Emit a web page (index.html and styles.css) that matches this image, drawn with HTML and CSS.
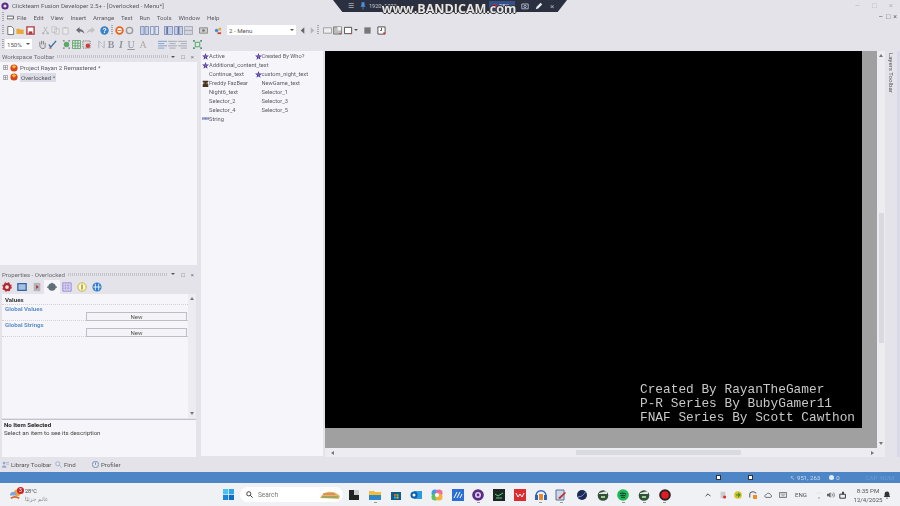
FILE: index.html
```html
<!DOCTYPE html>
<html lang="en">
  <head>
    <meta charset="UTF-8" />
    <meta name="viewport" content="width=device-width, initial-scale=1.0" />
    <title>Clickteam Fusion Developer</title>
    <link rel="stylesheet" href="styles.css">
  </head>
  <body>
    <div class="app">
      <!-- Title bar -->
      <div class="titlebar">
        <svg class="app-icon" viewBox="0 0 10 10"><circle cx="5" cy="5" r="4.5" fill="#5a2a86"/><circle cx="5" cy="5" r="2" fill="#e8d8f4"/></svg>
        <span class="title-text">Clickteam Fusion Developer 2.5+ - [Overlocked - Menu*]</span>
        <div class="win-controls">
          <span>&#8211;</span><span>&#9633;</span><span>&#215;</span>
        </div>
      </div>

      <!-- Menu -->
      <div class="menubar">
        <span class="grip"></span>
        <svg class="menu-icon" viewBox="0 0 10 6"><rect x="0" y="1" width="9" height="4" fill="#fff" stroke="#333"/></svg>
        <span class="menu-item">File</span>
        <span class="menu-item">Edit</span>
        <span class="menu-item">View</span>
        <span class="menu-item">Insert</span>
        <span class="menu-item">Arrange</span>
        <span class="menu-item">Text</span>
        <span class="menu-item">Run</span>
        <span class="menu-item">Tools</span>
        <span class="menu-item">Window</span>
        <span class="menu-item">Help</span>
        <div class="child-controls">
          <span>&#8211;</span><span>&#9633;</span><span>&#215;</span>
        </div>
      </div>

      <!-- Toolbars -->
      <div class="toolbar toolbar-top">
        <span class="grip"></span>
        <svg class="ic" viewBox="0 0 10 10"><path d="M2 .5h4l2.5 2.5v6.500h-6.500z" fill="#fff" stroke="#666"/></svg>
        <svg class="ic" viewBox="0 0 10 10"><path d="M.5 3h3l1 1h4v5h-8z" fill="#e9a838"/></svg>
        <svg class="ic" viewBox="0 0 10 10"><path d="M1 1h8v8h-8z" fill="#fff" stroke="#b23a3a" stroke-width="1.500"/><path d="M3 6h4v3h-4z" fill="#b23a3a"/></svg>
        <span class="gap-5"></span>
        <svg class="ic dim" viewBox="0 0 10 10"><path d="M3 1l4 6M7 1l-4 6" stroke="#999" fill="none"/><circle cx="2.500" cy="8" r="1.300" fill="#999"/><circle cx="7.500" cy="8" r="1.300" fill="#999"/></svg>
        <svg class="ic dim" viewBox="0 0 10 10"><path d="M1 1h5v6h-5zM4 3h5v6h-5z" fill="#eee" stroke="#aaa"/></svg>
        <svg class="ic dim" viewBox="0 0 10 10"><path d="M2 2h6v7h-6z" fill="#eee" stroke="#aaa"/><path d="M4 1h2v2h-2z" fill="#aaa"/></svg>
        <span class="gap-5"></span>
        <svg class="ic" viewBox="0 0 10 10"><path d="M4 1l-4 3.500 4 3.500v-2c2 0 4 .5 5.500 2.500-.5-3-2.500-5-5.500-5.300z" fill="#6b6b75"/></svg>
        <svg class="ic dim" viewBox="0 0 10 10"><path d="M6 1l4 3.500-4 3.500v-2c-2 0-4 .5-5.500 2.500.5-3 2.500-5 5.500-5.300z" fill="#aaa"/></svg>
        <span class="gap-4"></span>
        <svg class="ic" viewBox="0 0 10 10"><circle cx="5" cy="5" r="4.700" fill="#3b83c4"/><text x="5" y="8" text-anchor="middle" class="ic-text">?</text></svg>
        <span class="gap-2"></span><span class="grip"></span>
        <svg class="ic" viewBox="0 0 10 10"><circle cx="5" cy="5" r="3.700" fill="#fff" stroke="#e8641f" stroke-width="2"/><path d="M3 5h4" stroke="#e8641f"/></svg>
        <svg class="ic" viewBox="0 0 10 10"><circle cx="5" cy="5" r="3.500" fill="none" stroke="#999" stroke-width="1.500"/></svg>
        <span class="gap-5"></span>
        <svg class="ic" viewBox="0 0 10 10"><path d="M.5.5h4v9h-4zM5.500.5h4v9h-4z" fill="#c5d0e6" stroke="#7e8fb5"/></svg>
        <svg class="ic" viewBox="0 0 10 10"><path d="M.5.5h4v9h-4zM5.500.5h4v9h-4z" fill="#dde3f1" stroke="#7e8fb5"/></svg>
        <span class="gap-4"></span>
        <svg class="ic" viewBox="0 0 10 10"><path d="M.5.5h9v9h-9z" fill="#c5d0e6" stroke="#7e8fb5"/><path d="M3.500 1v8" stroke="#66789f" stroke-width="2"/></svg>
        <svg class="ic" viewBox="0 0 10 10"><path d="M.5.5h9v9h-9z" fill="#c5d0e6" stroke="#7e8fb5"/><path d="M5 1v8" stroke="#66789f" stroke-width="2"/></svg>
        <svg class="ic" viewBox="0 0 10 10"><path d="M.5.5h9v9h-9z" fill="#d3d6df" stroke="#a2a6b2"/><path d="M1 5h8" stroke="#a2a6b2"/></svg>
        <span class="gap-5"></span>
        <svg class="ic" viewBox="0 0 10 10"><path d="M.5 2h9v6h-9z" fill="#ccc" stroke="#888"/><circle cx="5" cy="5" r="1.500" fill="#777"/></svg>
        <span class="gap-4"></span>
        <svg class="ic" viewBox="0 0 10 10"><circle cx="4" cy="5" r="2" fill="#4b8fc8"/><path d="M6 2h3v3h-3z" fill="#e9a838"/><path d="M5 7h4v2h-4z" fill="#c9463a"/></svg>
        <span class="gap-5"></span>
        <div class="combo combo-frame"><span>2 - Menu</span><i class="caret"></i></div>
        <span class="gap-1"></span>
        <svg class="ic" viewBox="0 0 10 10"><path d="M7 1.500v7l-4-3.500z" fill="#666"/></svg>
        <svg class="ic" viewBox="0 0 10 10"><path d="M3 1.500v7l4-3.500z" fill="#b5b5bd"/></svg>
        <span class="grip"></span>
        <span class="gap-2"></span>
        <svg class="ic" viewBox="0 0 10 10"><path d="M.5 2h9v6h-9z" fill="#eee" stroke="#999"/></svg>
        <svg class="ic" viewBox="0 0 10 10"><path d="M.5 1h9v8h-9z" fill="#bbb" stroke="#777"/><path d="M5 1h4v4h-4z" fill="#eee"/><path d="M7 8h2v1h-2z" fill="#d33"/></svg>
        <span class="gap-1"></span>
        <svg class="ic" viewBox="0 0 10 10"><path d="M.5 1.500h8v7h-8z" fill="#fff" stroke="#444"/><path d="M7 8h2v1h-2z" fill="#d33"/></svg>
        <span class="gap-1"></span>
        <i class="caret"></i>
        <span class="gap-4"></span>
        <svg class="ic" viewBox="0 0 10 10"><path d="M1.500 1.500h7v7h-7z" fill="#777"/></svg>
        <span class="gap-4"></span>
        <svg class="ic" viewBox="0 0 10 10"><path d="M1 1h8v8h-8z" fill="#fff" stroke="#444"/><path d="M5 2v3h-1.500" stroke="#444" fill="none"/><path d="M7 7h2v2h-2z" fill="#d33"/></svg>
      </div>

      <div class="toolbar toolbar-bottom">
        <span class="grip"></span>
        <div class="combo combo-zoom"><span>150%</span><i class="caret"></i></div>
        <span class="gap-5"></span>
        <svg class="ic" viewBox="0 0 10 10"><path d="M2 5v-3M4 5v-4M6 5v-4M8 6v-3M2 5c0 3 1 4.500 3.500 4.500s2.500-1.500 2.500-3.500" stroke="#777" fill="#ddd"/></svg>
        <svg class="ic" viewBox="0 0 10 10"><path d="M1 5l2 3 6-7" stroke="#3a6ea5" stroke-width="1.500" fill="none"/><path d="M1 9h3" stroke="#c9463a"/></svg>
        <span class="gap-4"></span>
        <svg class="ic" viewBox="0 0 10 10"><path d="M1 1h2M7 1h2M1 9h2M7 9h2" stroke="#555" fill="none"/><circle cx="5" cy="5" r="3" fill="#5ba86a"/></svg>
        <svg class="ic" viewBox="0 0 10 10"><path d="M.5.5h9v9h-9zM3.500.5v9M6.500.5v9M.5 3.500h9M.5 6.500h9" stroke="#5ba86a" fill="none"/></svg>
        <svg class="ic" viewBox="0 0 10 10"><path d="M1 1h8v8h-8z" fill="#ddd" stroke="#777" stroke-dasharray="1.500 1"/><circle cx="6.500" cy="6.500" r="2.500" fill="#d23c3c"/></svg>
        <span class="gap-5"></span>
        <svg class="ic dim" viewBox="0 0 10 10"><path d="M2 1v8M2 1l3 3M8 9v-8M8 9l-3-3" stroke="#8894a8" fill="none"/></svg>
        <span class="fmt">B</span>
        <span class="fmt fmt-i">I</span>
        <span class="fmt fmt-u">U</span>
        <span class="fmt fmt-a">A</span>
        <span class="gap-9"></span>
        <svg class="ic" viewBox="0 0 10 10"><path d="M0 1.500h10M0 4h7M0 6.500h10M0 9h7" stroke="#7c9ccb" fill="none"/></svg>
        <svg class="ic" viewBox="0 0 10 10"><path d="M0 1.500h10M1.500 4h7M0 6.500h10M1.500 9h7" stroke="#a0a6b2" fill="none"/></svg>
        <svg class="ic" viewBox="0 0 10 10"><path d="M0 1.500h10M3 4h7M0 6.500h10M3 9h7" stroke="#a0a6b2" fill="none"/></svg>
        <span class="gap-5"></span>
        <svg class="ic" viewBox="0 0 10 10"><path d="M2.500 2.500h5v5h-5z" fill="#d9ebdc" stroke="#4a9a68"/><path d="M0 0h2v2h-2zM8 0h2v2h-2zM0 8h2v2h-2zM8 8h2v2h-2z" fill="#4a9a68"/></svg>
      </div>

      <!-- Main area -->
      <div class="main">
        <div class="left-dock">
          <div class="dock-head">
            <span>Workspace Toolbar</span><span class="dots"></span>
            <span class="dock-btns"><i class="caret"></i><b>&#9633;</b><b>&#215;</b></span>
          </div>
          <div class="tree">
            <div class="tree-row">
              <span class="expander">+</span>
              <svg class="tree-icon" viewBox="0 0 10 10"><circle cx="5" cy="5" r="4.500" fill="#d8431d"/><path d="M2 3l3-2 3 2-3 3z" fill="#f5b42b"/></svg>
              <span>Project Rayan 2 Remastered *</span>
            </div>
            <div class="tree-row">
              <span class="expander">+</span>
              <svg class="tree-icon" viewBox="0 0 10 10"><circle cx="5" cy="5" r="4.500" fill="#d8431d"/><path d="M2 3l3-2 3 2-3 3z" fill="#f5b42b"/></svg>
              <span class="selected">Overlocked *</span>
            </div>
          </div>
          <div class="dock-head props-head">
            <span>Properties - Overlocked</span><span class="dots"></span>
            <span class="dock-btns"><i class="caret"></i><b>&#9633;</b><b>&#215;</b></span>
          </div>
          <div class="props-tabs">
            <svg class="tab-ic" viewBox="0 0 12 12"><circle cx="6" cy="6" r="3.500" fill="none" stroke="#b4262f" stroke-width="2.500"/><circle cx="6" cy="6" r="5" fill="none" stroke="#b4262f" stroke-width="1.500" stroke-dasharray="2 2"/></svg>
            <svg class="tab-ic" viewBox="0 0 12 12"><path d="M1 2h10v8h-10z" fill="#a8c0df" stroke="#2f63a8" stroke-width="1.500"/></svg>
            <svg class="tab-ic" viewBox="0 0 12 12"><path d="M2 1h8v10h-8z" fill="#b5b5bb"/><path d="M5 3.500v5l3-2.500z" fill="#b02a2a"/></svg>
            <span class="tab-on"><svg class="tab-ic" viewBox="0 0 12 12"><circle cx="6" cy="6" r="4.500" fill="#5f6f76"/><path d="M0 6h12M6 1v2" stroke="#5f6f76" stroke-width="1.500"/></svg></span>
            <svg class="tab-ic" viewBox="0 0 12 12"><path d="M1 1h10v10h-10z" fill="#dcd6f2" stroke="#8d80cf"/><path d="M4.500 2v8M7.500 2v8M2 4.500h8M2 7.500h8" stroke="#8d80cf" stroke-dasharray="1 1"/></svg>
            <svg class="tab-ic" viewBox="0 0 12 12"><circle cx="6" cy="6" r="5" fill="#fff8c8" stroke="#bdb33a" stroke-width="1.200"/><path d="M6 3v6" stroke="#8c8420" stroke-width="1.500"/></svg>
            <svg class="tab-ic" viewBox="0 0 12 12"><circle cx="6" cy="6" r="5.500" fill="#2f7bd1"/><path d="M4 2v8M8 2v8M1.500 6h9" stroke="#fff"/></svg>
          </div>
          <div class="props-body">
            <div class="props-list">
              <div class="prop-row prop-title">Values</div>
              <div class="prop-row prop-group">Global Values</div>
              <div class="prop-row prop-action"><button class="new-btn">New</button></div>
              <div class="prop-row prop-group">Global Strings</div>
              <div class="prop-row prop-action"><button class="new-btn">New</button></div>
            </div>
            <div class="props-scroll"><i class="arrow-up"></i><i class="arrow-down"></i></div>
          </div>
          <div class="desc-box">
            <strong>No Item Selected</strong>
            <span>Select an item to see its description</span>
          </div>
        </div>

        <div class="objects">
          <div class="obj"><svg class="obj-icon" viewBox="0 0 10 10"><path d="M5 0l1.300 3.500 3.700.200-3 2.300 1 3.800-3-2.200-3 2.200 1-3.800-3-2.300 3.700-.200z" fill="#3c3fb8"/><circle cx="5" cy="5" r="1.300" fill="#e0557a"/></svg>Active</div>
          <div class="obj"><svg class="obj-icon" viewBox="0 0 10 10"><path d="M5 0l1.300 3.500 3.700.200-3 2.300 1 3.800-3-2.200-3 2.200 1-3.800-3-2.300 3.700-.200z" fill="#3c3fb8"/><circle cx="5" cy="5" r="1.300" fill="#e0557a"/></svg>Created By Who?</div>
          <div class="obj obj-wide"><svg class="obj-icon" viewBox="0 0 10 10"><path d="M5 0l1.300 3.500 3.700.200-3 2.300 1 3.800-3-2.200-3 2.200 1-3.800-3-2.300 3.700-.200z" fill="#3c3fb8"/><circle cx="5" cy="5" r="1.300" fill="#e0557a"/></svg>Additional_content_text</div>
          <div class="obj"><span class="obj-icon"></span>Continue_text</div>
          <div class="obj"><svg class="obj-icon" viewBox="0 0 10 10"><path d="M5 0l1.300 3.500 3.700.200-3 2.300 1 3.800-3-2.200-3 2.200 1-3.800-3-2.300 3.700-.200z" fill="#3c3fb8"/><circle cx="5" cy="5" r="1.300" fill="#e0557a"/></svg>custom_night_text</div>
          <div class="obj"><svg class="obj-icon" viewBox="0 0 10 10"><path d="M1 1h8v2h-8zM2 3h6v3h-6zM1 6h8v4h-8z" fill="#4b3320"/><path d="M3 4h1v1h-1zM6 4h1v1h-1z" fill="#e5c9a0"/></svg>Freddy FazBear</div>
          <div class="obj"><span class="obj-icon"></span>NewGame_text</div>
          <div class="obj"><span class="obj-icon"></span>Night6_text</div>
          <div class="obj"><span class="obj-icon"></span>Selector_1</div>
          <div class="obj"><span class="obj-icon"></span>Selector_2</div>
          <div class="obj"><span class="obj-icon"></span>Selector_3</div>
          <div class="obj"><span class="obj-icon"></span>Selector_4</div>
          <div class="obj"><span class="obj-icon"></span>Selector_5</div>
          <div class="obj"><svg class="obj-icon" viewBox="0 0 10 10"><path d="M0 3h10v4h-10z" fill="#c9d2ea"/><path d="M1 3.500v3M3 3.500v3M5 3.500v3M7 3.500v3M9 3.500v3" stroke="#3c4f9a"/></svg>String</div>
        </div>

        <div class="editor">
          <div class="editor-view">
            <div class="frame">
              <div class="credits">
                <div>Created By RayanTheGamer</div>
                <div>P-R Series By BubyGamer11</div>
                <div>FNAF Series By Scott Cawthon</div>
              </div>
            </div>
            <div class="v-scroll"><i class="arrow-up"></i><span class="v-thumb"></span><i class="arrow-down"></i></div>
          </div>
          <div class="h-scroll"><i class="arrow-left"></i><span class="h-thumb"></span><i class="arrow-right"></i></div>
        </div>

        <div class="layers-dock">
          <span class="layers-label">Layers Toolbar</span>
        </div>
      </div>

      <!-- Bottom tabs -->
      <div class="bottom-tabs">
        <span class="btab btab-lib"><svg class="btab-ic" viewBox="0 0 10 10"><circle cx="3" cy="3" r="2" fill="#9aa8c8"/><path d="M0 9c0-3 6-3 6 0zM6 2h4M6 4.500h4" stroke="#9aa8c8" fill="#9aa8c8"/></svg>Library Toolbar</span>
        <span class="btab btab-find"><svg class="btab-ic" viewBox="0 0 10 10"><circle cx="4" cy="4" r="3" fill="none" stroke="#8ea4cf"/><path d="M6 6l3.500 3.500" stroke="#8ea4cf"/></svg>Find</span>
        <span class="btab btab-prof"><svg class="btab-ic" viewBox="0 0 10 10"><circle cx="5" cy="5" r="4.500" fill="none" stroke="#5576a8"/><path d="M5 2v3.500" stroke="#5576a8"/></svg>Profiler</span>
      </div>

      <!-- Status bar -->
      <div class="statusbar">
        <span class="st-box st-a"></span>
        <span class="st-box st-b"></span>
        <span class="st-cursor">&#8598;</span>
        <span class="st-coord">951, 263</span>
        <span class="st-obj"></span>
        <span>0</span>
        <span class="st-caps">CAP&nbsp;&nbsp;NUM</span>
      </div>

      <!-- Windows taskbar -->
      <div class="taskbar">
        <div class="weather">
          <svg class="weather-ic" viewBox="0 0 14 14"><circle cx="9" cy="5" r="3.500" fill="#f0a030"/><path d="M1 8c0-3 2-4 4-4s3 1 3 4z" fill="#7fa8d6"/><path d="M2 11c3-2 6-2 9 0" stroke="#d9632a" stroke-width="2" fill="none"/></svg>
          <span class="badge">3</span>
          <div class="weather-text"><span>28°C</span><span class="weather-ar" dir="rtl">غائم جزئيًا</span></div>
        </div>
        <svg class="start" viewBox="0 0 12 12"><path d="M0 0h5.600v5.600h-5.600z" fill="#4cc2f1"/><path d="M6.400 0h5.600v5.600h-5.600z" fill="#2ba6ea"/><path d="M0 6.400h5.600v5.600h-5.600z" fill="#1a86da"/><path d="M6.400 6.400h5.600v5.600h-5.600z" fill="#0f6cc4"/></svg>
        <div class="search">
          <svg class="search-ic" viewBox="0 0 10 10"><circle cx="4" cy="4" r="3" fill="none" stroke="#222" stroke-width="1.200"/><path d="M6.200 6.200l3.300 3.300" stroke="#222" stroke-width="1.300"/></svg>
          <span>Search</span>
          <svg class="search-art" viewBox="0 0 20 10"><path d="M0 8c4-8 14-8 20-2l-1 3z" fill="#e3b46b"/><path d="M2 7h16" stroke="#5c9a50"/><path d="M3 4h12" stroke="#d86a3e"/></svg>
        </div>
        <div class="apps">
          <span class="app-slot"><svg viewBox="0 0 12 12"><path d="M1 1h5v5h5v5h-10z" fill="#222"/><path d="M6 1h5v5h-5z" fill="#ccc"/></svg></span>
          <span class="app-slot on"><svg viewBox="0 0 12 12"><path d="M0 2h5l1 1h6v8h-12z" fill="#f3bd38"/><path d="M0 6h12v5h-12z" fill="#2f86c9"/></svg></span>
          <span class="app-slot"><svg viewBox="0 0 12 12"><path d="M1 3h10v8h-10z" fill="#0f5c88"/><path d="M4 5h2v2h-2z" fill="#e8553a"/><path d="M6.500 5h2v2h-2z" fill="#74b84a"/><path d="M4 7.500h2v2h-2z" fill="#3ca5e8"/><path d="M6.500 7.500h2v2h-2z" fill="#f3bd38"/></svg></span>
          <span class="app-slot"><svg viewBox="0 0 12 12"><path d="M4 2h8v8h-8z" fill="#2b9be0"/><circle cx="4" cy="6" r="3.500" fill="#0b5ea8"/><circle cx="4" cy="6" r="1.500" fill="#fff"/></svg></span>
          <span class="app-slot"><svg viewBox="0 0 12 12"><circle cx="4" cy="4" r="3.500" fill="#3e9bea"/><circle cx="8" cy="4" r="3.500" fill="#ef6b9c"/><circle cx="4" cy="8" r="3.500" fill="#5ec26a"/><circle cx="8" cy="8" r="3.500" fill="#f0b23c"/><circle cx="6" cy="6" r="2" fill="#fff"/></svg></span>
          <span class="app-slot"><svg viewBox="0 0 12 12"><path d="M0 0h12v12h-12z" fill="#2a6fd6"/><path d="M2 9l3-6M5 9l3-6M8 9l2-4" stroke="#fff" fill="none"/></svg></span>
          <span class="app-slot on"><svg viewBox="0 0 12 12"><circle cx="6" cy="6" r="5.800" fill="#5a2a86"/><circle cx="6" cy="6" r="3" fill="#ded0ee"/><circle cx="6" cy="6" r="1.400" fill="#5a2a86"/></svg></span>
          <span class="app-slot"><svg viewBox="0 0 12 12"><path d="M0 0h12v12h-12z" fill="#1c2626"/><path d="M2 5l3 2 5-3M3 9h6" stroke="#5fd07a" fill="none"/></svg></span>
          <span class="app-slot"><svg viewBox="0 0 12 12"><path d="M0 0h12v12h-12z" fill="#de2b30"/><path d="M2 4l2 4 2-3 2 3 2-4" stroke="#fff" fill="none"/></svg></span>
          <span class="app-slot on"><svg viewBox="0 0 12 12"><path d="M1 7c0-7 10-7 10 0" fill="none" stroke="#2e63c6" stroke-width="1.500"/><path d="M0 6h3v5h-3zM9 6h3v5h-3z" fill="#2e63c6"/><path d="M4 5h4v6h-4z" fill="#e88a2a"/></svg></span>
          <span class="app-slot on"><svg viewBox="0 0 12 12"><path d="M1 1h8v10h-8z" fill="#cdd7ea" stroke="#5870a0"/><path d="M3 9l7-6 1 1-6 6" fill="#b5352d"/></svg></span>
          <span class="app-slot"><svg viewBox="0 0 12 12"><circle cx="6" cy="6" r="5" fill="#1d2a52"/><path d="M2 8c3 0 6-2 8-6" stroke="#7ea4e8" fill="none"/></svg></span>
          <span class="app-slot"><svg viewBox="0 0 12 12"><circle cx="6" cy="6.500" r="5.300" fill="#32503a"/><path d="M2 4l8-2v3h-8z" fill="#dfe9dc"/><path d="M4 7h4v2h-4z" fill="#9ccc8e"/></svg></span>
          <span class="app-slot on"><svg viewBox="0 0 12 12"><circle cx="6" cy="6" r="5.800" fill="#1cb954"/><path d="M3 4.500c2-.6 4-.5 6 .5M3.500 6.500c2-.5 3.500-.3 5 .4M4 8.300c1.500-.3 3-.2 4 .3" stroke="#123" fill="none"/></svg></span>
          <span class="app-slot on"><svg viewBox="0 0 12 12"><circle cx="6" cy="6.500" r="5.300" fill="#32503a"/><path d="M2 4l8-2v3h-8z" fill="#dfe9dc"/><path d="M4 7h4v2h-4z" fill="#9ccc8e"/></svg></span>
          <span class="app-slot on"><svg viewBox="0 0 12 12"><circle cx="6" cy="6" r="5.800" fill="#222"/><circle cx="6" cy="6" r="3.800" fill="#e21b25"/></svg></span>
        </div>
        <div class="tray">
          <svg class="tray-ic" viewBox="0 0 10 10"><path d="M2 6.500l3-3 3 3" fill="none" stroke="#333" stroke-width="1.100"/></svg>
          <svg class="tray-ic" viewBox="0 0 10 10"><path d="M2 1h6v8h-6z" fill="#ccc"/><circle cx="7" cy="7.500" r="2" fill="#d33"/></svg>
          <svg class="tray-ic" viewBox="0 0 10 10"><circle cx="5" cy="5" r="4.800" fill="#d8c326"/><path d="M2.500 5h5M5 2.500l2.500 2.500-2.500 2.500" stroke="#2a8a3a" fill="none" stroke-width="1.300"/></svg>
          <svg class="tray-ic" viewBox="0 0 10 10"><path d="M1 8v-4c0-2 2-3 4-3s3 1 4 2" stroke="#555" fill="none" stroke-width="1.300"/><path d="M5 5h5v5h-5z" fill="#ef8a25"/></svg>
          <svg class="tray-ic" viewBox="0 0 10 10"><path d="M2.500 8h5.500c2 0 2-3 .200-3.200-.5-2.500-4-2.800-5-.6-2.500 0-3 3.800-.7 3.800z" fill="none" stroke="#555"/></svg>
          <svg class="tray-ic" viewBox="0 0 10 10"><path d="M.5 2h9v6h-9z" fill="none" stroke="#555"/><path d="M2 4h6M3 6h4" stroke="#888"/></svg>
          <span class="tray-lang">ENG</span>
          <svg class="tray-ic" viewBox="0 0 10 10"><path d="M4 8h2v1.500h-2z" fill="#888"/><path d="M1 4c2-2.500 6-2.500 8 0" stroke="#ddd" fill="none"/></svg>
          <svg class="tray-ic tray-tight" viewBox="0 0 10 10"><path d="M0 3.500h2l2.500-2v7l-2.500-2h-2z" fill="#666"/><path d="M6 3c1 1 1 3 0 4M8 2c1.500 1.500 1.500 4.500 0 6" stroke="#666" fill="none"/></svg>
          <svg class="tray-ic tray-tight" viewBox="0 0 10 10"><path d="M1 4h7v5h-7z" fill="none" stroke="#222" stroke-width="1.100"/><path d="M4 4v-3h2v3z" fill="#222"/></svg>
          <div class="clock"><span>8:35 PM</span><span>12/4/2025</span></div>
          <svg class="tray-ic tray-bell" viewBox="0 0 10 10"><path d="M5 .5c-2 0-3 1.500-3 3.500v2l-1 1.500h8l-1-1.500v-2c0-2-1-3.500-3-3.500zM4 8.500h2v1h-2z" fill="#333"/></svg>
        </div>
      </div>

      <!-- Screen recorder overlay -->
      <div class="recorder">
        <span class="rec-menu">&#9776;</span>
        <svg class="rec-pin" viewBox="0 0 8 10"><path d="M2 0h4v4l1.500 2h-7l1.500-2zM3.500 6h1v4h-1z" fill="#4a8fe0"/></svg>
        <span class="rec-size">1920&#215;1080</span>
        <span class="rec-btn"><i class="rec-dot"></i>REC</span>
        <svg class="rec-cam" viewBox="0 0 10 10"><path d="M1 2.500h8v6h-8z" fill="none" stroke="#ccd"/><circle cx="5" cy="5.500" r="1.500" fill="none" stroke="#ccd"/></svg>
        <svg class="rec-pen" viewBox="0 0 10 10"><path d="M1 9l1-3 5-5 2 2-5 5z" fill="#e8e8f0"/></svg>
        <span class="rec-close">&#215;</span>
      </div>
      <div class="watermark">www.BANDICAM.com</div>
    </div>
  </body>
</html>
```

FILE: styles.css
```css
* {
  box-sizing: border-box;
}
html,
body {
  margin: 0;
  height: 100%;
  overflow: hidden;
}
body {
  font-family: Roboto, "Open Sans", sans-serif;
  font-size: 6.100px;
  color: #555;
  background: #e3e3e9;
}
.app {
  position: relative;
  width: 900px;
  height: 506px;
  display: flex;
  flex-direction: column;
  filter: blur(.3px);
}

/* top bars */
.titlebar {
  height: 11px;
  display: flex;
  align-items: center;
  padding-left: 1px;
  font-size: 6.200px;
  color: #5a5a62;
}
.app-icon {
  width: 8px;
  height: 8px;
  margin-right: 3px;
}
.win-controls {
  margin-left: auto;
  display: flex;
  gap: 12px;
  padding-right: 7px;
  color: #b5b5bd;
  font-size: 8px;
}
.menubar {
  height: 12px;
  display: flex;
  align-items: center;
  padding-left: 2px;
  font-size: 6.100px;
  color: #5a5a62;
}
.menu-icon {
  width: 7px;
  height: 5px;
  margin: 0 3px 0 2px;
}
.menu-item {
  margin-right: 6.800px;
}
.child-controls {
  margin-left: auto;
  display: flex;
  gap: 3px;
  padding-right: 3px;
  font-size: 7px;
  color: #666;
}
.grip {
  width: 2px;
  height: 10px;
  margin-right: 1px;
  background: repeating-linear-gradient(#a8a8b0 0 1px, transparent 1px 2px);
}
.toolbar {
  height: 14px;
  display: flex;
  align-items: center;
  padding-left: 2px;
}
.ic {
  width: 9px;
  height: 9px;
  margin: 0 .5px;
  flex: none;
}
.dim {
  opacity: .6;
}
.ic-text {
  font: bold 7.500px "Liberation Sans", sans-serif;
  fill: #fff;
}
.gap-1 {
  width: 1px;
}
.gap-2 {
  width: 2px;
}
.gap-4 {
  width: 4px;
}
.gap-5 {
  width: 5px;
}
.gap-9 {
  width: 9px;
}
.combo {
  height: 10px;
  display: flex;
  align-items: center;
  justify-content: space-between;
  padding: 0 2px;
  background: #fff;
  font-size: 6.100px;
  color: #555;
}
.combo-frame {
  width: 69px;
}
.combo-zoom {
  width: 27px;
}
.caret {
  display: inline-block;
  width: 0;
  height: 0;
  border-left: 2px solid transparent;
  border-right: 2px solid transparent;
  border-top: 2px solid #555;
}
.fmt {
  width: 10px;
  text-align: center;
  font: bold 10px "Liberation Serif", serif;
  color: #9096a6;
}
.fmt-i {
  font-style: italic;
}
.fmt-u {
  text-decoration: underline;
  font-weight: normal;
}
.fmt-a {
  margin-left: 2px;
  font-weight: normal;
  color: #b0a8a8;
}

/* main docks */
.main {
  height: 406px;
  display: flex;
}
.left-dock {
  width: 197px;
  display: flex;
  flex-direction: column;
}
.dock-head {
  height: 11px;
  display: flex;
  align-items: center;
  gap: 3px;
  padding-left: 2px;
  color: #6a6a72;
}
.dots {
  flex: 1;
  height: 3px;
  background: repeating-linear-gradient(90deg, #c2c2ca 0 1px, transparent 1px 2px);
}
.dock-btns {
  display: flex;
  align-items: center;
  gap: 6px;
  padding-right: 3px;
}
.dock-btns b {
  font-weight: normal;
  font-size: 6px;
}
.tree {
  height: 203px;
  padding-top: 1px;
  background: #f6f6fa;
}
.tree-row {
  height: 9.500px;
  display: flex;
  align-items: center;
  padding-left: 3px;
  color: #5a5a62;
}
.expander {
  width: 5px;
  height: 5px;
  margin-right: 2px;
  border: 1px solid #b0b0b8;
  font-size: 5px;
  line-height: 3px;
  text-align: center;
}
.tree-icon {
  width: 8px;
  height: 8px;
  margin-right: 2px;
}
.selected {
  background: #dcdce6;
  padding: 1px;
}
.props-head {
  margin-top: 3px;
  height: 12px;
}
.props-tabs {
  height: 14px;
  display: flex;
  align-items: center;
  gap: 5px;
  padding-left: 2px;
}
.tab-ic {
  width: 10px;
  height: 10px;
  display: block;
}
.tab-on {
  background: #f6f6fa;
  padding: 2px 3px;
  margin: 0 -3px;
}
.props-body {
  flex: 1;
  display: flex;
  margin: 0 1px 1px 2px;
  background: #f6f6fa;
}
.props-list {
  flex: 1;
  padding-top: 1px;
}
.prop-row {
  border-bottom: 1px dotted #d0d0d6;
}
.prop-title {
  height: 10px;
  padding-left: 3px;
  font-weight: 700;
  color: #333;
  line-height: 9px;
}
.prop-group {
  height: 7px;
  padding-left: 3px;
  font-weight: 700;
  color: #5b8fc9;
  line-height: 7px;
  border-bottom: 0;
}
.prop-action {
  height: 9px;
  display: flex;
  justify-content: flex-end;
  padding-right: 1px;
}
.new-btn {
  width: 101px;
  height: 9px;
  padding: 0;
  border: 1px solid #bdbdc3;
  background: #f4f4f8;
  font: 6.100px Roboto, sans-serif;
  line-height: 6px;
  color: #555;
}
.props-scroll,
.v-scroll {
  display: flex;
  flex-direction: column;
  justify-content: space-between;
  align-items: center;
  width: 8px;
  padding: 3px 0;
  background: #ececf1;
}
.arrow-up,
.arrow-down {
  width: 0;
  height: 0;
  border-left: 2px solid transparent;
  border-right: 2px solid transparent;
}
.arrow-up {
  border-bottom: 3px solid #777;
}
.arrow-down {
  border-top: 3px solid #777;
}
.arrow-left,
.arrow-right {
  width: 0;
  height: 0;
  border-top: 2px solid transparent;
  border-bottom: 2px solid transparent;
}
.arrow-left {
  border-right: 3px solid #777;
}
.arrow-right {
  border-left: 3px solid #777;
}
.desc-box {
  height: 38px;
  margin: 0 1px 0 2px;
  padding: 1px 2px;
  display: flex;
  flex-direction: column;
  background: #f6f6fa;
  border-top: 1px solid #c2c2c8;
  color: #444;
  line-height: 8px;
}
.desc-box strong {
  color: #222;
}

.objects {
  width: 122px;
  height: 405px;
  margin-left: 4px;
  padding-top: 1px;
  display: grid;
  grid-template-columns: 52.500px 1fr;
  grid-auto-rows: 8.900px;
  background: #f6f6fa;
  font-size: 5.700px;
  color: #5a5a62;
}
.obj {
  display: flex;
  align-items: center;
  padding-left: 1px;
  white-space: nowrap;
}
.obj-wide {
  grid-column: span 2;
}
.obj-icon {
  width: 7px;
  height: 7px;
  flex: none;
}

.editor {
  width: 560px;
  margin-left: 2px;
  display: flex;
  flex-direction: column;
}
.editor-view {
  height: 397px;
  display: flex;
}
.frame {
  flex: 1;
  background: #a0a0a0;
  padding-right: 15px;
  padding-bottom: 20px;
}
.credits {
  height: 100%;
  display: flex;
  flex-direction: column;
  justify-content: flex-end;
  align-items: flex-start;
  padding: 0 0 3px 315px;
  background: #000;
  font: 12.800px/14px "Liberation Mono", monospace;
  color: #c8c8c8;
  white-space: nowrap;
}
.v-scroll {
  justify-content: flex-start;
}
.v-thumb {
  width: 5px;
  height: 130px;
  margin: 156px 0 auto;
  background: #d9d9e0;
}
.h-scroll {
  height: 9px;
  display: flex;
  align-items: center;
  padding: 0 11px 0 6px;
  background: #ececf1;
}
.h-thumb {
  width: 165px;
  height: 5px;
  margin: 0 auto 0 242px;
  background: #d9d9e0;
}
.layers-dock {
  flex: 1;
  padding: 2px 0 0 3px;
  border-right: 3px solid #d8d8e6;
}
.layers-label {
  writing-mode: vertical-rl;
  color: #555;
}

/* bottom bars */
.bottom-tabs {
  height: 15px;
  display: flex;
  padding-left: 2px;
  color: #555;
}
.btab {
  display: flex;
  align-items: center;
  gap: 2px;
  white-space: nowrap;
  height: 15px;
}
.btab-ic {
  width: 7px;
  height: 7px;
}
.btab-lib {
  width: 53px;
}
.btab-find {
  width: 37px;
}
.statusbar {
  height: 11px;
  display: flex;
  align-items: center;
  background: #4c86c6;
  color: #c9dcf0;
}
.st-box {
  width: 5px;
  height: 5px;
  background: #fff;
  border: 1px solid #333;
}
.st-a {
  margin-left: 716px;
}
.st-b {
  margin-left: 27px;
}
.st-cursor {
  margin-left: 37px;
  margin-right: 2px;
  font-size: 6px;
}
.st-obj {
  width: 5px;
  height: 5px;
  margin: 0 2px 0 9px;
  border-radius: 50%;
  background: #e3ecf6;
}
.st-caps {
  margin-left: auto;
  padding-right: 6px;
  color: #6c9cd0;
}

.taskbar {
  flex: 1;
  display: flex;
  align-items: center;
  background: #eff1f5;
}
.weather {
  width: 220px;
  display: flex;
  align-items: center;
  padding-left: 9px;
  font-size: 5.500px;
  color: #444;
}
.weather-ic {
  width: 13px;
  height: 13px;
}
.badge {
  width: 7px;
  height: 7px;
  margin: -8px 0 0 -5px;
  border-radius: 50%;
  background: #c9252a;
  color: #fff;
  font-size: 5px;
  line-height: 7px;
  text-align: center;
}
.weather-text {
  display: flex;
  flex-direction: column;
  margin-left: 1px;
  line-height: 8px;
}
.weather-ar {
  color: #888;
  font-family: "DejaVu Sans", sans-serif;
}
.start {
  width: 11px;
  height: 11px;
  flex: none;
  margin-left: 3px;
}
.search {
  width: 103px;
  height: 15px;
  margin: 0 1px 0 6px;
  display: flex;
  align-items: center;
  padding: 0 3px 0 6px;
  border-radius: 8px;
  background: #fff;
  font-size: 6.500px;
  color: #777;
}
.search-ic {
  width: 7px;
  height: 7px;
  margin-right: 5px;
}
.search-art {
  width: 20px;
  height: 10px;
  margin-left: auto;
}
.apps {
  display: flex;
}
.app-slot {
  position: relative;
  width: 20.700px;
  height: 17px;
  display: flex;
  align-items: center;
  justify-content: center;
}
.app-slot svg {
  width: 12px;
  height: 12px;
}
.app-slot.on::after {
  content: "";
  position: absolute;
  bottom: 0;
  left: 9px;
  width: 3px;
  height: 1px;
  background: #999;
}
.tray {
  margin-left: auto;
  display: flex;
  align-items: center;
  gap: 7px;
  padding-right: 9px;
}
.tray-ic {
  width: 8px;
  height: 8px;
  flex: none;
}
.tray-tight {
  margin-left: -3px;
}
.tray-bell {
  margin-left: -6px;
}
.tray-lang {
  width: 14px;
  text-align: center;
  color: #555;
}
.clock {
  display: flex;
  flex-direction: column;
  align-items: center;
  width: 28px;
  line-height: 9px;
  color: #555;
  white-space: nowrap;
}

/* recorder bar sits over the window title */
.recorder {
  position: absolute;
  top: 0;
  left: 333px;
  width: 234px;
  height: 12px;
  display: flex;
  align-items: center;
  padding-left: 15px;
  background: #2a3040;
  clip-path: polygon(0 0, 100% 0, 96% 100%, 4% 100%);
  color: #aab;
  font-size: 5.500px;
}
.rec-menu {
  width: 12px;
  font-size: 7px;
}
.rec-pin {
  width: 6px;
  height: 8px;
  margin-right: 3px;
}
.rec-size {
  width: 120px;
  color: #c8c8d4;
}
.rec-btn {
  display: flex;
  align-items: center;
  gap: 2px;
  width: 26px;
  height: 11px;
  padding-left: 3px;
  background: #33508a;
  color: #dde;
}
.rec-dot {
  width: 5px;
  height: 5px;
  border-radius: 50%;
  background: #e5202a;
}
.rec-cam,
.rec-pen {
  width: 8px;
  height: 8px;
  margin-left: 6px;
}
.rec-close {
  margin-left: 7px;
  font-size: 8px;
}
.watermark {
  position: absolute;
  top: 1px;
  left: 299px;
  width: 300px;
  text-align: center;
  font: 700 12.500px/16px "Open Sans", sans-serif;
  color: #e6e6ea;
  text-shadow: -1px 0 #333, 1px 0 #333, 0 -1px #333, 0 1px #333;
}
```
